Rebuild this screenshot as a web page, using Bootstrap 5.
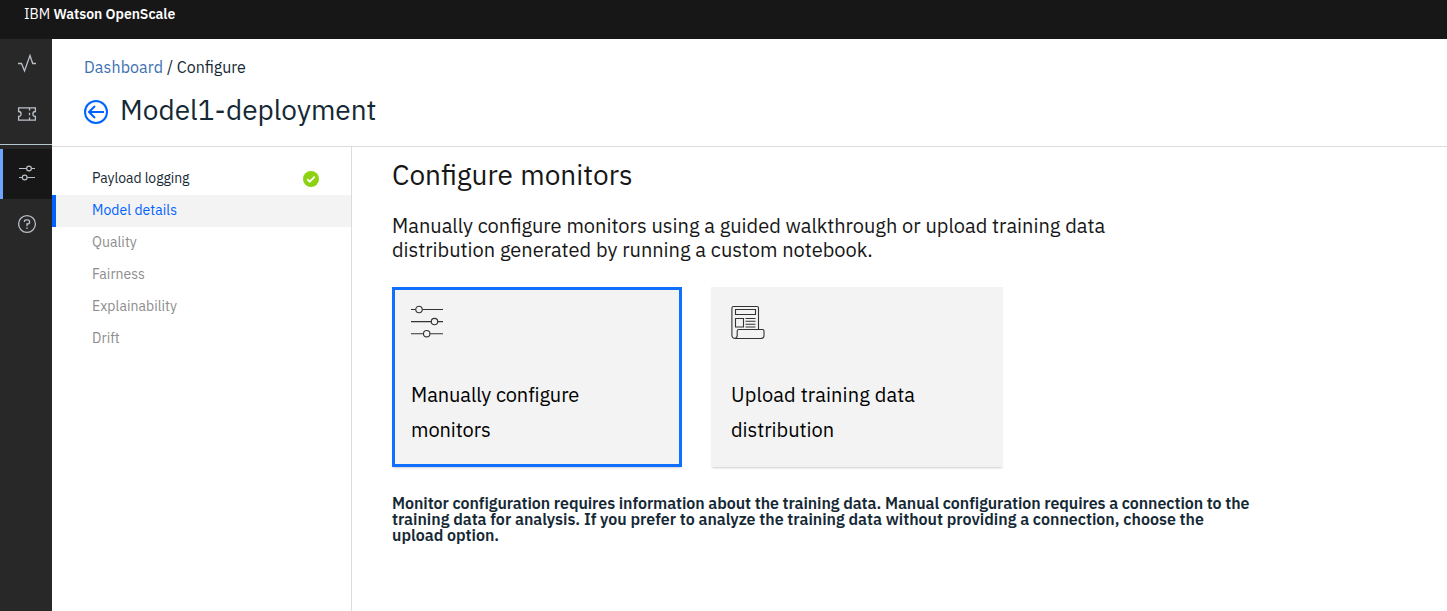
<!DOCTYPE html>
<html lang="en">
<head>
<meta charset="utf-8">
<title>IBM Watson OpenScale</title>
<meta name="viewport" content="width=device-width, initial-scale=1">
<link href="https://cdn.jsdelivr.net/npm/bootstrap@5.3.0/dist/css/bootstrap.min.css" rel="stylesheet">
<style>
body{font-family:"IBM Plex Sans",Roboto,sans-serif;color:#152935;height:611px;overflow:hidden}
svg{fill:none;stroke:currentColor;display:block}
.topbar{height:39px;background:#171717;font-size:14px;line-height:18px;padding:5px 24px}
.product{font-weight:600;letter-spacing:-.03px}
.rail{width:52px;background:#282828}
.rail a{height:50px;color:#b9bfc7;padding-left:2px}
.rail a.current{background:#171717;border-left:3px solid #6ea6ff;padding:0 1px 2px 0}
.rail hr{margin:5px 0 4px;border-color:#b5c8cc;opacity:1}
.page-head{height:108px;border-bottom:1px solid #dcdcdc;padding:16px 32px 0}
.crumbs{font-size:16px;line-height:24px}
.crumbs a{color:#3d70b2;letter-spacing:.12px}
.page-title{font-size:28px;line-height:36px;margin:13px 0 0;gap:12px;font-weight:400}
.back{color:#0062ff;padding-top:4px}
.steps{width:300px;border-right:1px solid #dcdcdc;padding-top:16px;font-size:14px}
.steps a{height:32px;padding:0 32px 2px 40px;color:#8c8c8c;letter-spacing:.05px}
.steps a.done{color:#152935;letter-spacing:-.08px}
.steps a.done svg{margin-top:2px}
.steps a.current{background:#f3f3f3;color:#0062ff;border-left:4px solid #0062ff;padding-left:36px}
.content-area{padding:10px 0 0 40px}
.content-area h2{font-size:28px;line-height:36px;color:#171717;font-weight:400;margin:0 0 21px;word-spacing:.7px}
.intro{font-size:20px;line-height:24px;color:#171717;margin:0 0 25px;word-spacing:.08px}
.options{gap:29px}
.option{width:292px;height:180px;background:#f3f3f3;box-shadow:0 2px 2px -1px rgba(0,0,0,.2);color:#000;font-size:20px;line-height:35px;padding:18px 20px 20px}
.option.chosen{width:290px;border:3px solid #0f6fff;padding:15px 16px 17px}
.option.chosen div{letter-spacing:-.08px}
.option svg{color:#333}
.upload-line{letter-spacing:.12px}
.note{font-size:16px;line-height:16px;font-weight:600;margin:28px 0 0}
.note-first{letter-spacing:-.06px}
</style>
</head>
<body class="d-flex flex-column m-0 bg-white">
<header class="topbar text-white flex-shrink-0"><span>IBM</span> <span class="product">Watson OpenScale</span></header>
<div class="d-flex flex-grow-1">
<nav class="rail d-flex flex-column flex-shrink-0">
  <a href="#" aria-label="Insights" class="d-flex align-items-center justify-content-center"><svg width="20" height="20" stroke-width="1.3"><path d="M1 9.5h3.5L7.5 17 13 1.5l2.7 8H19"/></svg></a>
  <a href="#" aria-label="Tickets" class="d-flex align-items-center justify-content-center"><svg width="20" height="20" stroke-width="1.3"><path d="M1.6 3.9h16.8v3.6a2.5 2.5 0 0 0 0 5v3.6H1.6v-3.6a2.5 2.5 0 0 0 0-5zM12.5 4v2.5m0 2.2v2.6m0 2.2V16"/></svg></a>
  <hr>
  <a href="#" aria-label="Configure" class="current d-flex align-items-center justify-content-center"><svg width="20" height="20" stroke-width="1.2"><path d="M2 5.5h7.5m5 0H18M2 14.5h3.2m5 0H18"/><circle cx="12" cy="5.5" r="2.4"/><circle cx="7.7" cy="14.5" r="2.4"/></svg></a>
  <a href="#" aria-label="Help" class="d-flex align-items-center justify-content-center"><svg width="20" height="20" stroke-width="1.3"><circle cx="10" cy="10" r="8.4"/><path d="M7.4 8V7.6c0-1 .9-1.8 1.9-1.8h1.2a2.1 2.1 0 0 1 0 4.2H10v2.2M10 13.6v1.5"/></svg></a>
</nav>
<main class="flex-grow-1 d-flex flex-column">
  <div class="page-head">
    <div class="crumbs"><a href="#" class="text-decoration-none">Dashboard</a> <span>/ Configure</span></div>
    <h1 class="page-title d-flex align-items-center"><a href="#" class="back" aria-label="Back"><svg width="24" height="24" stroke-width="2"><circle cx="12" cy="12" r="11"/><path d="M20 12H5.5M11 6l-6 6 6 6"/></svg></a><span>Model1-deployment</span></h1>
  </div>
  <div class="d-flex flex-grow-1">
    <nav class="steps flex-shrink-0">
      <a href="#" class="done d-flex align-items-center justify-content-between text-decoration-none"><span>Payload logging</span><svg width="16" height="16"><circle cx="8" cy="8" r="8" fill="#8cd211" stroke="none"/><path d="M4.3 8.2l2.5 2.4 4.9-5" stroke="#fff" stroke-width="1.9"/></svg></a>
      <a href="#" class="current d-flex align-items-center text-decoration-none">Model details</a>
      <a href="#" class="d-flex align-items-center text-decoration-none">Quality</a>
      <a href="#" class="d-flex align-items-center text-decoration-none">Fairness</a>
      <a href="#" class="d-flex align-items-center text-decoration-none">Explainability</a>
      <a href="#" class="d-flex align-items-center text-decoration-none">Drift</a>
    </nav>
    <section class="content-area">
      <h2>Configure monitors</h2>
      <p class="intro">Manually configure monitors using a guided walkthrough or upload training data<br>distribution generated by running a custom notebook.</p>
      <div class="options d-flex">
        <div class="option chosen d-flex flex-column justify-content-between">
          <svg width="34" height="34" stroke-width="1.1"><path d="M0 4.5h4.7m6.6 0H32M0 16.6h20.2m6.6 0H32M0 28.7h12.4m6.6 0H32"/><circle cx="8" cy="4.5" r="3.2"/><circle cx="23.5" cy="16.6" r="3.2"/><circle cx="15.7" cy="28.7" r="3.2"/></svg>
          <div>Manually configure<br>monitors</div>
        </div>
        <div class="option d-flex flex-column justify-content-between">
          <svg width="34" height="34" stroke-width="1.1"><path d="M27.5 24.5V3a1.5 1.5 0 0 0-1.5-1.5H2.5A1.7 1.7 0 0 0 .9 3v27a3.5 3.5 0 0 0 3.3 3.5H30a3 3 0 0 0 3-3v-4.5a1.5 1.5 0 0 0-1.5-1.5H7.7A1.5 1.5 0 0 0 6.2 26v4.5a3 3 0 0 1-2.7 3M4.5 4.5h20v5h-20zM4.5 13.5h8v8.5h-8zM14.5 13.5h10m-10 2.8h10m-10 2.9h10m-10 2.8h10"/></svg>
          <div><span class="upload-line">Upload training data</span><br>distribution</div>
        </div>
      </div>
      <p class="note"><span class="note-first">Monitor configuration requires information about the training data. Manual configuration requires a connection to the</span><br>training data for analysis. If you prefer to analyze the training data without providing a connection, choose the<br>upload option.</p>
    </section>
  </div>
</main>
</div>
<script src="https://cdn.jsdelivr.net/npm/bootstrap@5.3.0/dist/js/bootstrap.bundle.min.js"></script>
</body>
</html>
